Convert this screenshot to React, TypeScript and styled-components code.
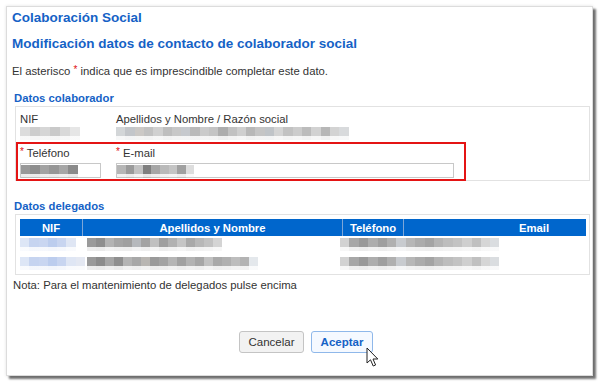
import styled, { createGlobalStyle } from "styled-components";

const GlobalStyle = createGlobalStyle`
  body {
    margin: 0;
    background: #ffffff;
    font-family: "Liberation Sans", Arial, sans-serif;
    color: #333333;
  }
`;

const Page = styled.div`
  position: relative;
  width: 600px;
  height: 383px;
  padding: 6px;
  box-sizing: border-box;
  overflow: hidden;
`;

const Panel = styled.div`
  width: 587px;
  height: 370px;
  box-sizing: border-box;
  border: 1px solid #dcdcdc;
  background: #ffffff;
  box-shadow: 0 0 3px rgba(0, 0, 0, 0.12), 3px 3px 2px rgba(0, 0, 0, 0.55);
  padding: 2px 0 0 5px;
`;

const Title = styled.h1<{ $gap: number }>`
  margin: ${(p) => p.$gap}px 0 0 0;
  font-size: 13.5px;
  line-height: 18px;
  font-weight: bold;
  color: #1562c6;
`;

const Hint = styled.p`
  margin: 9px 0 0 0;
  font-size: 11.3px;
  line-height: 16px;
  color: #333333;
`;

const Star = styled.span`
  color: #e01010;
  font-size: 10px;
  vertical-align: 2px;
`;

const SectionTitle = styled.h2<{ $gap: number }>`
  margin: ${(p) => p.$gap}px 0 0 2px;
  font-size: 11.3px;
  line-height: 14px;
  font-weight: bold;
  color: #1562c6;
`;

const Box = styled.div`
  margin: 1px 0 0 3px;
  width: 575px;
  box-sizing: border-box;
  border: 1px solid #e2e2e2;
  padding: 0 4px 0 4px;
`;

const FieldRow = styled.div<{ $top: number; $h?: number }>`
  display: grid;
  grid-template-columns: 96px 1fr;
  padding-top: ${(p) => p.$top}px;
  height: ${(p) => (p.$h ? `${p.$h}px` : "auto")};
  box-sizing: border-box;
`;

const Label = styled.div`
  font-size: 11.3px;
  line-height: 14px;
  color: #333333;
`;

const Required = styled.div`
  margin: 2px 0 -1px -4px;
  width: 450px;
  box-sizing: border-box;
  border: 2px solid #e41414;
  padding: 1px 0 1px 2px;
  display: grid;
  grid-template-columns: 96px 1fr;
  row-gap: 3px;
`;

const Input = styled.div<{ $w: number }>`
  width: ${(p) => p.$w}px;
  height: 15px;
  box-sizing: border-box;
  border: 1px solid #c8c8c8;
  background: #ffffff;
  padding: 1px 0 0 0;
`;

const Redacted = styled.div<{ $cells: string[]; $h: number; $cell: number }>`
  height: ${(p) => p.$h}px;
  width: ${(p) => p.$cells.length * p.$cell}px;
  background: ${(p) =>
    `linear-gradient(to right, ${p.$cells
      .map((c, i) => `${c} ${i * p.$cell}px ${(i + 1) * p.$cell}px`)
      .join(", ")})`};
  position: relative;
  &::after {
    content: "";
    position: absolute;
    left: 0;
    right: 0;
    top: 100%;
    height: ${(p) => Math.round(p.$h * 0.45)}px;
    background: inherit;
    opacity: 0.18;
  }
`;

const Table = styled.table`
  margin: 4px 0 0 0;
  width: 566px;
  border-collapse: collapse;
  table-layout: fixed;
`;

const Th = styled.th<{ $w?: number; $indent?: number }>`
  width: ${(p) => (p.$w ? `${p.$w}px` : "auto")};
  height: 17px;
  padding: 0 0 0 ${(p) => p.$indent ?? 0}px;
  background: #0066cc;
  color: #ffffff;
  font-size: 11.3px;
  font-weight: bold;
  text-align: center;
  border-left: 1px solid #7da6d8;
  &:first-child {
    border-left: none;
  }
`;

const Td = styled.td<{ $shift?: number }>`
  height: 17px;
  padding: 2px 0 0 ${(p) => p.$shift ?? 0}px;
  vertical-align: top;
`;

const Note = styled.p`
  margin: 3px 0 0 1px;
  font-size: 11.3px;
  line-height: 14px;
  color: #333333;
`;

const Actions = styled.div`
  margin-top: 39px;
  display: flex;
  justify-content: center;
  gap: 7px;
  padding-left: 8px;
`;

const Button = styled.button<{ $primary?: boolean; $w: number }>`
  width: ${(p) => p.$w}px;
  height: 22px;
  padding: 0;
  font-family: "Liberation Sans", Arial, sans-serif;
  font-size: 11.5px;
  font-weight: ${(p) => (p.$primary ? "bold" : "normal")};
  color: ${(p) => (p.$primary ? "#1562c6" : "#333333")};
  background: ${(p) => (p.$primary ? "#f5f9ff" : "#f2f2f2")};
  border: 1px solid ${(p) => (p.$primary ? "#8fb8ea" : "#c4c4c4")};
  border-radius: 3px;
`;

const Cursor = styled.svg`
  position: absolute;
  left: 366px;
  top: 347px;
`;

const nifVal = ["#dcdcdc", "#cdcdcd", "#d6d6d6", "#c9c9c9", "#d9d9d9", "#e6e6e6"];
const nameVal = [
  "#d3d6d8", "#c3c6ca", "#ccc9c6", "#c2c2c2", "#d0d0d0", "#bebebe", "#c8c8c8", "#c6c9ce",
  "#b9b9b9", "#cbcbcb", "#c4c4c4", "#adadad", "#c2c2c2", "#cfcfcf", "#b8b8b8", "#c5c5c5",
  "#c0c4c8", "#d4d4d4", "#c2c2c2", "#cccccc", "#bcbcbc", "#d2d2d2", "#b7b7b7", "#d3d3d3",
  "#d8dadc",
];
const phoneVal = ["#989898", "#8d8d8d", "#a2a2a2", "#969696", "#a6a6a6", "#8a8a8a"];
const mailVal = ["#b6b6b6", "#9a9a9a", "#c2c2c2", "#7f7f7f", "#a6a6a6", "#b9b9b9", "#c4c4c4", "#a0a0a0", "#dddddd"];
const nifBlue = ["#dde6f6", "#c6d4f0", "#c9d6f1", "#bccdee", "#c8d5f0", "#dfe6f4"];
const name1 = [
  "#9a9a9a", "#8e8e8e", "#b3b3b3", "#a5a5a5", "#a0a0a0", "#b6b9bd", "#a3a3a3", "#c0c0c0",
  "#9f9f9f", "#b1b1b1", "#c5c5c5", "#a9a9a9", "#b8b8b8", "#c2c2c2", "#d4d4d4",
];
const name2 = [
  "#9a9a9a", "#8c8c8c", "#a6a6a6", "#8f8f8f", "#b4b4b4", "#a8a8a8", "#b9b6b2", "#9a9a9a",
  "#a3a3a3", "#b5b5b5", "#a1a1a1", "#b3b3b3", "#a6a6a6", "#c1c1c1", "#a9a9a9", "#b0b0b0",
  "#bdbdbd", "#b3b3b3", "#e4e8ec",
];
const telMail = [
  "#d2d2d2", "#a7a7a7", "#999999", "#adadad", "#9f9f9f", "#b0b0b0", "#c8cbcf", "#b7b7b7",
  "#acacac", "#a4a4a4", "#b4b4b4", "#bdbdbd", "#c3c3c3", "#cfcfcf", "#c0c0c0", "#d6d6d6",
  "#dadde0",
];

const delegados = [
  { nif: nifBlue, name: name1, tel: telMail },
  { nif: [...nifBlue, "#e4e8f2"], name: name2, tel: telMail },
];

export default function App() {
  return (
    <Page>
      <GlobalStyle />
      <Panel>
        <Title $gap={0}>Colaboración Social</Title>
        <Title $gap={8}>Modificación datos de contacto de colaborador social</Title>
        <Hint>
          El asterisco <Star>*</Star> indica que es imprescindible completar este dato.
        </Hint>

        <SectionTitle $gap={12}>Datos colaborador</SectionTitle>
        <Box>
          <FieldRow $top={5}>
            <Label>NIF</Label>
            <Label>Apellidos y Nombre / Razón social</Label>
          </FieldRow>
          <FieldRow $top={1} $h={14}>
            <Redacted $cells={nifVal} $h={9} $cell={10} />
            <Redacted $cells={nameVal} $h={9} $cell={9.3} />
          </FieldRow>
          <Required>
            <Label>
              <Star>*</Star> Teléfono
            </Label>
            <Label>
              <Star>*</Star> E-mail
            </Label>
            <Input $w={81}>
              <Redacted $cells={phoneVal} $h={9} $cell={9.5} />
            </Input>
            <Input $w={338}>
              <Redacted $cells={mailVal} $h={9} $cell={8.6} />
            </Input>
          </Required>
        </Box>

        <SectionTitle $gap={18}>Datos delegados</SectionTitle>
        <Box>
          <Table>
            <thead>
              <tr>
                <Th $w={62}>NIF</Th>
                <Th $w={259}>Apellidos y Nombre</Th>
                <Th $w={60}>Teléfono</Th>
                <Th $indent={78}>Email</Th>
              </tr>
            </thead>
            <tbody>
              {delegados.map((d, i) => (
                <tr key={i}>
                  <Td>
                    <Redacted $cells={d.nif} $h={9} $cell={9.3} />
                  </Td>
                  <Td $shift={4}>
                    <Redacted $cells={d.name} $h={9} $cell={9} />
                  </Td>
                  <Td colSpan={2}>
                    <Redacted $cells={d.tel} $h={9} $cell={9.4} style={{ marginLeft: -3 }} />
                  </Td>
                </tr>
              ))}
            </tbody>
          </Table>
        </Box>
        <Note>Nota: Para el mantenimiento de delegados pulse encima</Note>

        <Actions>
          <Button $w={65}>Cancelar</Button>
          <Button $primary $w={62}>
            Aceptar
          </Button>
        </Actions>
      </Panel>
      <Cursor width="14" height="21" viewBox="0 0 14 21">
        <path
          d="M1 1 L1 16 L4.5 12.8 L7.2 19 L9.6 18 L7 12 L11.8 12 Z"
          fill="#ffffff"
          stroke="#222222"
          strokeWidth="1"
          strokeLinejoin="round"
        />
      </Cursor>
    </Page>
  );
}
